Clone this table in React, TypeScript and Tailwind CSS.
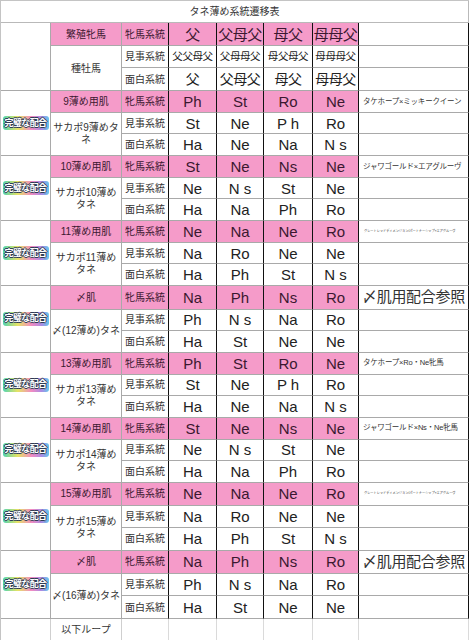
import React from 'react';

type Group = {
  skin: string;
  seed: string[];
  rows: string[][];
  note: string;
  noteKind: 'sm' | 'lg' | 'xs';
  heights: string[];
};

const SHORT = ['h-[22px]', 'h-[21px]', 'h-[22px]'];
const TALL = ['h-[23px]', 'h-[22px]', 'h-[23px]'];

const TINY_NOTE = 'グレートレッドディメンジョン/パートナーシップ×エアグルーヴ';

const GROUPS: Group[] = [
  {
    skin: '9薄め用肌',
    seed: ['サカポ9薄めタ', 'ネ'],
    rows: [
      ['Ph', 'St', 'Ro', 'Ne'],
      ['St', 'Ne', 'P h', 'Ro'],
      ['Ha', 'Ne', 'Na', 'N s'],
    ],
    note: 'タケホープ×ミッキークイーン',
    noteKind: 'sm',
    heights: SHORT,
  },
  {
    skin: '10薄め用肌',
    seed: ['サカポ10薄め', 'タネ'],
    rows: [
      ['St', 'Ne', 'Ns', 'Ne'],
      ['Ne', 'N s', 'St', 'Ne'],
      ['Ha', 'Na', 'Ph', 'Ro'],
    ],
    note: 'ジャワゴールド×エアグルーヴ',
    noteKind: 'sm',
    heights: SHORT,
  },
  {
    skin: '11薄め用肌',
    seed: ['サカポ11薄め', 'タネ'],
    rows: [
      ['Ne', 'Na', 'Ne', 'Ro'],
      ['Na', 'Ro', 'Ne', 'Ne'],
      ['Ha', 'Ph', 'St', 'N s'],
    ],
    note: TINY_NOTE,
    noteKind: 'xs',
    heights: SHORT,
  },
  {
    skin: '〆肌',
    seed: ['〆(12薄め)タネ'],
    rows: [
      ['Na', 'Ph', 'Ns', 'Ro'],
      ['Ph', 'N s', 'Na', 'Ro'],
      ['Ha', 'St', 'Ne', 'Ne'],
    ],
    note: '〆肌用配合参照',
    noteKind: 'lg',
    heights: SHORT,
  },
  {
    skin: '13薄め用肌',
    seed: ['サカポ13薄め', 'タネ'],
    rows: [
      ['Ph', 'St', 'Ro', 'Ne'],
      ['St', 'Ne', 'P h', 'Ro'],
      ['Ha', 'Ne', 'Na', 'N s'],
    ],
    note: 'タケホープ×Ro・Ne牝馬',
    noteKind: 'sm',
    heights: SHORT,
  },
  {
    skin: '14薄め用肌',
    seed: ['サカポ14薄め', 'タネ'],
    rows: [
      ['St', 'Ne', 'Ns', 'Ne'],
      ['Ne', 'N s', 'St', 'Ne'],
      ['Ha', 'Na', 'Ph', 'Ro'],
    ],
    note: 'ジャワゴールド×Ns・Ne牝馬',
    noteKind: 'sm',
    heights: SHORT,
  },
  {
    skin: '15薄め用肌',
    seed: ['サカポ15薄め', 'タネ'],
    rows: [
      ['Ne', 'Na', 'Ne', 'Ro'],
      ['Na', 'Ro', 'Ne', 'Ne'],
      ['Ha', 'Ph', 'St', 'N s'],
    ],
    note: TINY_NOTE,
    noteKind: 'xs',
    heights: TALL,
  },
  {
    skin: '〆肌',
    seed: ['〆(16薄め)タネ'],
    rows: [
      ['Na', 'Ph', 'Ns', 'Ro'],
      ['Ph', 'N s', 'Na', 'Ro'],
      ['Ha', 'St', 'Ne', 'Ne'],
    ],
    note: '〆肌用配合参照',
    noteKind: 'lg',
    heights: TALL,
  },
];

// grey cell / cell with a black right edge
const G = 'p-0 border-r border-b border-[#a9a9a9]';
const K = 'p-0 border-r border-b border-r-[#111] border-b-[#a9a9a9]';
const PINK = 'bg-[#f59bc9] text-[#3b1830]';

const NOTE_STYLE = {
  sm: 'text-[7.5px] pl-[4px] tracking-[-0.2px]',
  lg: 'text-[15px] pl-[3px] tracking-[-0.3px] whitespace-nowrap',
  xs: 'text-[3.2px] pl-[5px] whitespace-nowrap overflow-hidden',
};

function Badge() {
  return (
    <div className="mx-auto flex h-[14px] w-[46px] items-center justify-center rounded-[3px] bg-[linear-gradient(90deg,#4fd3b0_0%,#e6e364_32%,#f28bc2_62%,#a98be3_84%,#63c7ec_100%)] text-[9px] font-bold leading-none tracking-[-0.6px] text-white [text-shadow:1px_0_0_#2f3d55,-1px_0_0_#2f3d55,0_1px_0_#2f3d55,0_-1px_0_#2f3d55]">
      完璧な配合
    </div>
  );
}

function GroupRows({ g }: { g: Group }) {
  return (
    <>
      <tr className={g.heights[0]}>
        <td rowSpan={3} className={G}>
          <Badge />
        </td>
        <td className={`${G} ${PINK} text-center text-[10px]`}>{g.skin}</td>
        <td className={`${K} ${PINK} text-center text-[10px]`}>牝馬系統</td>
        {g.rows[0].map((v, i) => (
          <td key={i} className={`${K} ${PINK} text-center text-[15px] leading-none`}>
            {v}
          </td>
        ))}
        <td className={`${K} text-left text-[#333] ${NOTE_STYLE[g.noteKind]}`}>{g.note}</td>
      </tr>
      <tr className={g.heights[1]}>
        <td rowSpan={2} className={`${G} text-center text-[10px] leading-[12px] text-[#333]`}>
          {g.seed.map((s) => (
            <div key={s}>{s}</div>
          ))}
        </td>
        <td className={`${K} text-center text-[10px] text-[#333]`}>見事系統</td>
        {g.rows[1].map((v, i) => (
          <td key={i} className={`${K} text-center text-[15px] leading-none text-[#222]`}>
            {v}
          </td>
        ))}
        <td className={K} />
      </tr>
      <tr className={g.heights[2]}>
        <td className={`${K} text-center text-[10px] text-[#333]`}>面白系統</td>
        {g.rows[2].map((v, i) => (
          <td key={i} className={`${K} text-center text-[15px] leading-none text-[#222]`}>
            {v}
          </td>
        ))}
        <td className={K} />
      </tr>
    </>
  );
}

export default function App() {
  return (
    <div className="h-[640px] w-[474px] overflow-hidden bg-white font-['Liberation_Sans','Noto_Sans_CJK_JP',sans-serif]">
      <table className="w-[468px] table-fixed border-separate border-spacing-0 border-l border-t border-[#c4c4c4]">
        <colgroup>
          <col className="w-[50px]" />
          <col className="w-[71px]" />
          <col className="w-[47px]" />
          <col className="w-[48px]" />
          <col className="w-[47px]" />
          <col className="w-[49px]" />
          <col className="w-[46px]" />
          <col className="w-[110px]" />
        </colgroup>
        <tbody>
          <tr className="h-[22px]">
            <td colSpan={8} className="border-b border-r border-[#b9b9b9] p-0 text-center text-[10px] text-[#333]">
              タネ薄め系統遷移表
            </td>
          </tr>

          {/* 繁殖牝馬 / 種牡馬 header */}
          <tr className="h-[23px]">
            <td rowSpan={3} className={G} />
            <td className={`${G} ${PINK} text-center text-[10px]`}>繁殖牝馬</td>
            <td className={`${K} ${PINK} text-center text-[10px]`}>牝馬系統</td>
            {['父', '父母父', '母父', '母母父'].map((v) => (
              <td key={v} className={`${K} ${PINK} text-center text-[15px] leading-none tracking-[-0.5px]`}>
                {v}
              </td>
            ))}
            <td className={K} />
          </tr>
          <tr className="h-[22px]">
            <td rowSpan={2} className={`${G} text-center text-[10px] text-[#333]`}>
              種牡馬
            </td>
            <td className={`${K} text-center text-[10px] text-[#333]`}>見事系統</td>
            {['父父母父', '父母母父', '母父母父', '母母母父'].map((v) => (
              <td key={v} className={`${K} text-center text-[10.5px] leading-none tracking-[-0.4px] text-[#222]`}>
                {v}
              </td>
            ))}
            <td className={K} />
          </tr>
          <tr className="h-[23px]">
            <td className={`${K} text-center text-[10px] text-[#333]`}>面白系統</td>
            {['父', '父母父', '母父', '母母父'].map((v) => (
              <td key={v} className={`${K} text-center text-[14px] leading-none tracking-[-0.5px] text-[#222]`}>
                {v}
              </td>
            ))}
            <td className={K} />
          </tr>

          {GROUPS.map((g, i) => (
            <GroupRows key={i} g={g} />
          ))}

          <tr className="h-[22px]">
            <td className="border-r border-b border-[#cfcfcf] p-0" />
            <td className="border-r border-b border-[#cfcfcf] p-0 text-center text-[10px] text-[#333]">以下ループ</td>
            {[0, 1, 2, 3, 4, 5].map((i) => (
              <td key={i} className="border-r border-b border-[#dadada] p-0" />
            ))}
          </tr>
        </tbody>
      </table>
    </div>
  );
}
